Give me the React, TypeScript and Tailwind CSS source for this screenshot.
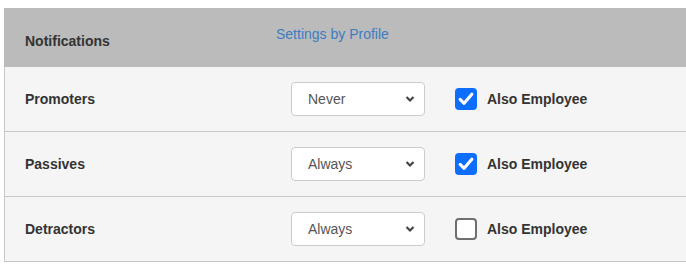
import React, { useState } from 'react';

const rows = [
  { name: 'Promoters', freq: 'Never', employee: true },
  { name: 'Passives', freq: 'Always', employee: true },
  { name: 'Detractors', freq: 'Always', employee: false },
];

function Checkbox({ checked, onChange }: { checked: boolean; onChange: () => void }) {
  return (
    <button
      type="button"
      onClick={onChange}
      className={
        checked
          ? 'w-[22px] h-[22px] rounded-[4px] bg-[#0d6efd] flex items-center justify-center'
          : 'w-[22px] h-[22px] rounded-[4px] border-2 border-[#6f6f6f] bg-white'
      }
    >
      {checked && (
        <svg width="18" height="18" viewBox="0 0 16 16">
          <path d="M2.8 8.4 L6.3 11.8 L13.2 3.8" fill="none" stroke="white" strokeWidth="2.8" strokeLinecap="round" strokeLinejoin="round" />
        </svg>
      )}
    </button>
  );
}

function Row({ name, freq, employee }: { name: string; freq: string; employee: boolean }) {
  const [value, setValue] = useState(freq);
  const [checked, setChecked] = useState(employee);
  return (
    <div className="flex items-center h-[65px] bg-[#f5f5f5] border-l border-b border-[#c8c8c8]">
      <div className="w-[286px] pl-[20px] text-[14px] font-bold text-[#333]">{name}</div>
      <div className="relative w-[134px] h-[34px]">
        <select
          value={value}
          onChange={(e) => setValue(e.target.value)}
          className="appearance-none w-full h-full bg-white border border-[#cccccc] rounded-[4px] pl-[16px] text-[14px] text-[#555] outline-none"
        >
          <option>Never</option>
          <option>Always</option>
        </select>
        <svg className="absolute right-[10px] top-[13px] pointer-events-none" width="10" height="8" viewBox="0 0 10 8">
          <path d="M1.5 2 L5 5.5 L8.5 2" fill="none" stroke="#444" strokeWidth="2.2" />
        </svg>
      </div>
      <div className="ml-[30px] flex items-center">
        <Checkbox checked={checked} onChange={() => setChecked(!checked)} />
        <span className="ml-[10px] text-[14px] font-bold text-[#333]">Also Employee</span>
      </div>
    </div>
  );
}

export default function App() {
  return (
    <div className="bg-white w-[686px] h-[272px] pt-[8px] pl-[4px] font-['Liberation_Sans',Arial,sans-serif]">
      <div className="flex h-[59px] bg-[#bbbbbb]">
        <div className="w-[272px] pl-[21px] pt-[23px] text-[14px] leading-[20px] font-bold text-[#333]">Notifications</div>
        <div className="pt-[16px] text-[14px] leading-[20px] text-[#3b7dc1]">Settings by Profile</div>
      </div>
      {rows.map((r) => (
        <Row key={r.name} {...r} />
      ))}
    </div>
  );
}
